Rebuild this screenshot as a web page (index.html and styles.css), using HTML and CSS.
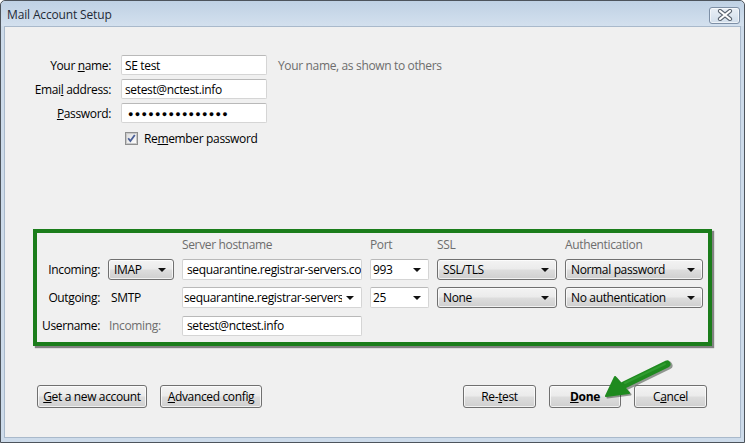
FILE: index.html
```html
<!DOCTYPE html>
<html>
<head>
<meta charset="utf-8">
<title>Mail Account Setup</title>
<link rel="stylesheet" href="styles.css">
</head>
<body>
<div class="window">
  <div class="titlebar">
    <span class="title">Mail Account Setup</span>
    <div class="close">
      <svg width="16" height="12" viewBox="0 0 16 12">
        <path d="M3 2 L13 10 M13 2 L3 10" stroke="#5a6470" stroke-width="4.2" stroke-linecap="round"/>
        <path d="M3 2 L13 10 M13 2 L3 10" stroke="#ffffff" stroke-width="2.2" stroke-linecap="round"/>
      </svg>
    </div>
  </div>
  <div class="client">
    <div class="identity">
      <span class="lbl">Your <u>n</u>ame:</span>
      <div class="field">SE test</div>
      <span class="hint">Your name, as shown to others</span>

      <span class="lbl">Emai<u>l</u> address:</span>
      <div class="field">setest@nctest.info</div>
      <span></span>

      <span class="lbl"><u>P</u>assword:</span>
      <div class="field pw">●●●●●●●●●●●●●●●</div>
      <span></span>

      <span></span>
      <div class="remember">
        <span class="checkbox">
          <svg width="13" height="13" viewBox="0 0 13 13">
            <defs><linearGradient id="cbg" x1="0" y1="0" x2="1" y2="1"><stop offset="0" stop-color="#dcdcdc"/><stop offset="1" stop-color="#ffffff"/></linearGradient></defs>
            <rect x="0.5" y="0.5" width="12" height="12" fill="#f4f4f4" stroke="#8e8f8f"/>
            <rect x="1.5" y="1.5" width="10" height="10" fill="url(#cbg)" stroke="#c8c8c8"/>
            <path d="M3.2 6.2 L5.4 9 L9.8 3" fill="none" stroke="#4a5f97" stroke-width="1.8"/>
          </svg>
        </span>
        <span>Re<u>m</u>ember password</span>
      </div>
      <span></span>
    </div>

    <div class="server-box">
      <span></span>
      <span></span>
      <span class="head">Server hostname</span>
      <span class="head">Port</span>
      <span class="head">SSL</span>
      <span class="head">Authentication</span>

      <span class="rlbl">Incoming:</span>
      <div class="select"><span>IMAP</span><i class="caret"></i></div>
      <div class="field tight"><span class="clip">sequarantine.registrar-servers.com</span></div>
      <div class="field combo"><span>993</span><i class="caret"></i></div>
      <div class="select"><span>SSL/TLS</span><i class="caret"></i></div>
      <div class="select"><span>Normal password</span><i class="caret"></i></div>

      <span class="rlbl">Outgoing:</span>
      <span class="plain">SMTP</span>
      <div class="field combo hostcombo"><span class="clip">sequarantine.registrar-servers.com</span><i class="caret"></i></div>
      <div class="field combo"><span>25</span><i class="caret"></i></div>
      <div class="select"><span>None</span><i class="caret"></i></div>
      <div class="select"><span>No authentication</span><i class="caret"></i></div>

      <span class="rlbl">Username:</span>
      <span class="plain grey">Incoming:</span>
      <div class="field tight user">setest@nctest.info</div>
      <span></span>
      <span></span>
      <span></span>
    </div>

    <div class="buttons">
      <div class="group">
        <div class="btn w110"><u>G</u>et a new account</div>
        <div class="btn w102"><u>A</u>dvanced config</div>
      </div>
      <div class="group">
        <div class="btn w73">Re-<u>t</u>est</div>
        <div class="btn w72 bold"><u>D</u>one</div>
        <div class="btn w73">C<u>a</u>ncel</div>
      </div>
    </div>

    <svg class="arrow" width="84" height="48" viewBox="0 0 84 48">
      <g transform="translate(1.5,1.5)" opacity="0.45">
        <path d="M27 30 L70 9" stroke="#1d2b1d" stroke-width="8" stroke-linecap="round"/>
        <path d="M9 41 L18 22 L32 38 Z" fill="#1d2b1d" stroke="#1d2b1d" stroke-width="2" stroke-linejoin="round"/>
      </g>
      <path d="M27 30 L70 9" stroke="#1f8a1f" stroke-width="7" stroke-linecap="round"/>
      <path d="M9 41 L18 22 L32 38 Z" fill="#1f8a1f" stroke="#1f8a1f" stroke-width="2" stroke-linejoin="round"/>
      <path d="M28 28 L68 9" stroke="#3aa83a" stroke-width="2" stroke-linecap="round" opacity="0.6"/>
    </svg>
  </div>
</div>
</body>
</html>
```

FILE: styles.css
```css
* { box-sizing: border-box; }
html, body { margin: 0; padding: 0; }
body {
  font-family: "Open Sans", "Noto Sans", sans-serif;
  font-size: 12px;
  letter-spacing: -0.35px;
  color: #000;
  background: #fff;
}
u { text-decoration: underline; text-underline-offset: 1px; }

.window {
  width: 745px;
  height: 443px;
  border: 1px solid #4d545c;
  border-radius: 5px 5px 0 0;
  background: #cddbea;
  padding: 0 3px 4px 3px;
  display: flex;
  flex-direction: column;
}

.titlebar {
  height: 25px;
  flex: none;
  background: linear-gradient(#bfd1e4, #d3e0ee);
  margin: 0 -3px;
  padding: 0 4px 0 6px;
  display: flex;
  align-items: center;
  justify-content: space-between;
  border-radius: 5px 5px 0 0;
}
.title {
  color: #1e2a36;
  font-size: 12px;
  letter-spacing: -0.15px;
  margin-top: 2px;
}
.close {
  width: 31px;
  height: 17px;
  margin-top: 3px;
  border: 1px solid #7d8fa6;
  border-radius: 3px;
  background: linear-gradient(#e9eff6, #d2deeb);
  box-shadow: inset 0 0 0 1px rgba(255,255,255,0.6);
  display: flex;
  align-items: center;
  justify-content: center;
}

.client {
  position: relative;
  flex: 1;
  background: #f0f0f0;
  border: 1px solid #a9b9cb;
  display: flex;
  flex-direction: column;
}

/* identity form */
.identity {
  display: grid;
  grid-template-columns: 91px 146px auto;
  grid-auto-rows: 20px;
  column-gap: 10px;
  row-gap: 4px;
  margin: 28px 0 0 15px;
  align-items: center;
}
.lbl { text-align: right; white-space: nowrap; }
.hint { color: #6d6d6d; margin-left: 1px; white-space: nowrap; }

.field {
  height: 20px;
  background: #fff;
  border: 1px solid #d5d5d5;
  border-top-color: #b9b9b9;
  border-radius: 2px;
  padding: 0 3px;
  display: flex;
  align-items: center;
  white-space: nowrap;
  overflow: hidden;
}
.pw {
  font-size: 9px;
  letter-spacing: 1.3px;
  padding-left: 6px;
}
.remember {
  display: flex;
  align-items: center;
  gap: 6px;
  padding-left: 4px;
  margin-top: 2px;
  height: 14px;
}
.checkbox { display: flex; width: 13px; height: 13px; }

/* server settings */
.server-box {
  width: 679px;
  margin: 82px 0 0 28px;
  border: 4px solid #1b7d1b;
  box-shadow: 2px 2px 1px rgba(40,40,40,0.55);
  display: grid;
  grid-template-columns: 59px 66px 180px 59px 120px 138px;
  grid-template-rows: 16px 21px 21px 21px;
  column-gap: 8px;
  row-gap: 7px;
  padding: 3px 0 6px 4px;
  align-items: center;
}
.head { color: #6d6d6d; white-space: nowrap; }
.rlbl { text-align: right; white-space: nowrap; }
.plain { padding-left: 3px; white-space: nowrap; }
.grey { color: #6d6d6d; padding-left: 1px; }

.field.tight { height: 21px; padding: 0 0 0 4px; }
.field.user { height: 20px; }
.clip { overflow: hidden; white-space: nowrap; display: block; flex: 1; min-width: 0; }
.field.combo {
  height: 21px;
  padding: 0 7px 0 2px;
  justify-content: space-between;
}
.field.hostcombo { padding-left: 1px; }
.field.hostcombo .clip { margin-right: 4px; }

.select {
  height: 21px;
  border: 1px solid #707070;
  border-radius: 3px;
  background: linear-gradient(#f3f3f3 0%, #ebebeb 48%, #dddddd 52%, #cfcfcf 100%);
  box-shadow: inset 0 0 0 1px rgba(255,255,255,0.7);
  display: flex;
  align-items: center;
  justify-content: space-between;
  padding: 0 7px 0 5px;
  white-space: nowrap;
}
.caret {
  width: 0;
  height: 0;
  border-left: 4px solid transparent;
  border-right: 4px solid transparent;
  border-top: 4px solid #111;
  flex: none;
}

/* buttons */
.buttons {
  display: flex;
  justify-content: space-between;
  margin: 39px 0 0 32px;
  width: 670px;
}
.group { display: flex; gap: 13px; }
.btn {
  height: 23px;
  border: 1px solid #707070;
  border-radius: 3px;
  background: linear-gradient(#f3f3f3 0%, #ebebeb 48%, #dddddd 52%, #cfcfcf 100%);
  box-shadow: inset 0 0 0 1px rgba(255,255,255,0.7);
  display: flex;
  align-items: center;
  justify-content: center;
  white-space: nowrap;
}
.w110 { width: 110px; }
.w102 { width: 102px; }
.w73 { width: 73px; }
.w72 { width: 72px; }
.bold { font-weight: bold; }

.arrow {
  position: absolute;
  left: 592px;
  top: 328px;
}
```
